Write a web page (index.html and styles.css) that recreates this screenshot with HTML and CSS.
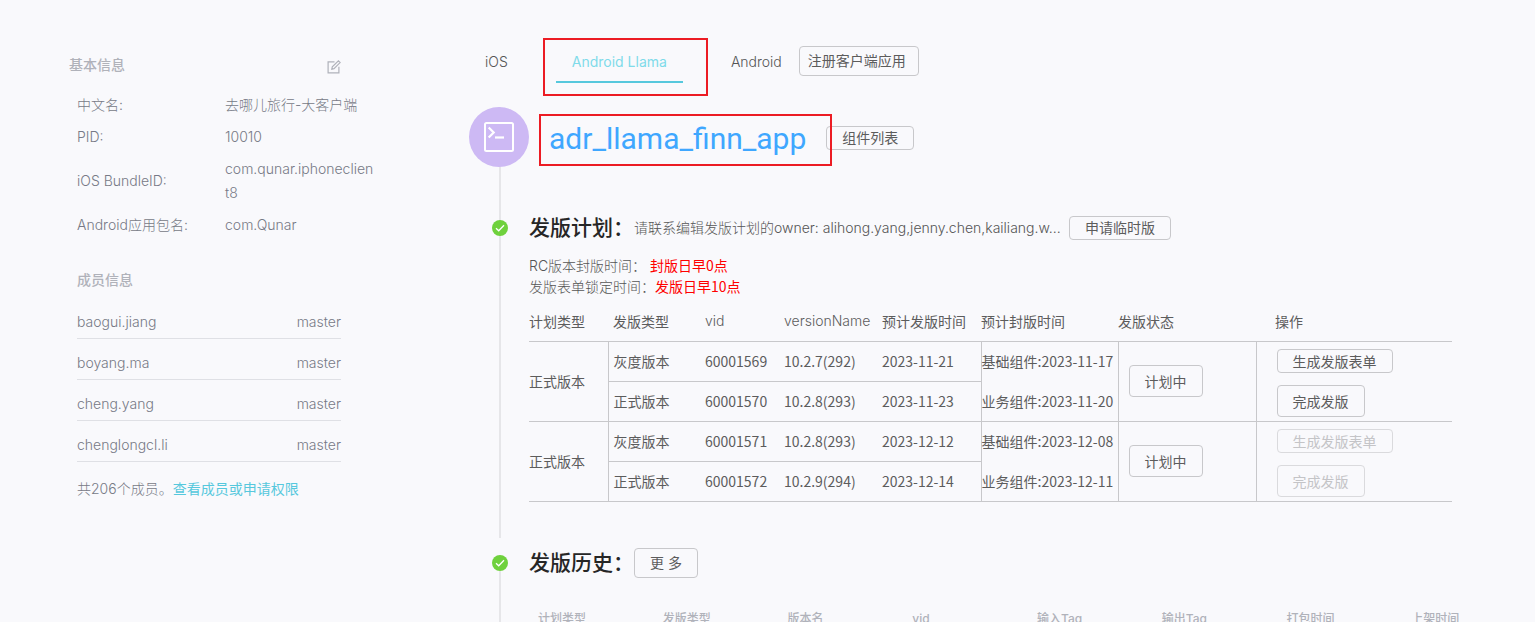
FILE: index.html
```html
<!DOCTYPE html>
<html lang="zh-CN">
<head>
<meta charset="utf-8">
<title>adr_llama_finn_app</title>
<link rel="stylesheet" href="styles.css">
</head>
<body>
<div class="app">
  <aside class="sidebar">
    <section class="basic">
      <header class="basic-head">
        <h2 class="side-title">基本信息</h2>
        <button class="icon-btn" type="button" aria-label="编辑">
          <svg width="14" height="14" viewBox="0 0 14 14" fill="none" stroke="#b0b2ba" stroke-width="1.2"><path d="M7.5 1.8H1.1v11.1h10.800V6.700"/><path d="M4.800 9.200l.5-2.300L11.400.9l1.700 1.700-6.100 6.100z"/></svg>
        </button>
      </header>
      <dl class="info">
        <dt>中文名:</dt><dd>去哪儿旅行-大客户端</dd>
        <dt>PID:</dt><dd>10010</dd>
        <dt>iOS BundleID:</dt><dd>com.qunar.iphoneclient8</dd>
        <dt>Android应用包名:</dt><dd>com.Qunar</dd>
      </dl>
    </section>
    <section class="members">
      <h2 class="side-title">成员信息</h2>
      <ul class="member-list">
        <li><span>baogui.jiang</span><span>master</span></li>
        <li><span>boyang.ma</span><span>master</span></li>
        <li><span>cheng.yang</span><span>master</span></li>
        <li><span>chenglongcl.li</span><span>master</span></li>
      </ul>
      <p class="member-total">共206个成员。<a href="#members">查看成员或申请权限</a></p>
    </section>
  </aside>

  <main class="main">
    <nav class="tabs">
      <a class="tab" href="#ios">iOS</a>
      <a class="tab tab-active" href="#llama">Android Llama<span class="mark mark-tab"></span></a>
      <a class="tab" href="#android">Android</a>
      <button class="btn btn-register" type="button">注册客户端应用</button>
    </nav>

    <div class="node node-app">
      <div class="rail">
        <div class="avatar">
          <svg width="30" height="30" viewBox="0 0 30 30" fill="none" stroke="#fff"><rect x="1" y="1" width="28" height="28" rx="1.500" stroke-width="2"/><path d="M4.700 5.500l5 5-5 5" stroke-width="2.200"/><path d="M11 15.500h9" stroke-width="2.200"/></svg>
        </div>
      </div>
      <div class="app-head">
        <h1 class="app-name"><a href="#app">adr_llama_finn_app</a><span class="mark mark-name"></span></h1>
        <button class="btn btn-small" type="button">组件列表</button>
      </div>
    </div>

    <div class="node node-plan">
      <div class="rail">
        <svg class="dot" width="16" height="16" viewBox="0 0 16 16"><circle cx="8" cy="8" r="8" fill="#6fd13d"/><path d="M4 8.200l2.700 2.600L12 5.300" fill="none" stroke="#fff" stroke-width="1.300"/></svg>
      </div>
      <div class="body">
        <div class="head">
          <h2 class="title">发版计划：</h2>
          <span class="owner">请联系编辑发版计划的owner: alihong.yang,jenny.chen,kailiang.w...</span>
          <button class="btn btn-small" type="button">申请临时版</button>
        </div>
        <p class="note">RC版本封版时间： <em>封版日早0点</em></p>
        <p class="note">发版表单锁定时间：<em>发版日早10点</em></p>
        <table class="plan">
          <colgroup><col class="c1"><col class="c2"><col class="c3"><col class="c4"><col class="c5"><col class="c6"><col class="c7"><col class="c8"></colgroup>
          <thead>
            <tr><th>计划类型</th><th class="in">发版类型</th><th class="latin">vid</th><th class="latin">versionName</th><th>预计发版时间</th><th>预计封版时间</th><th>发版状态</th><th class="op">操作</th></tr>
          </thead>
          <tbody>
            <tr>
              <td class="line" rowspan="2">正式版本</td>
              <td class="in left line">灰度版本</td><td class="line">60001569</td><td class="line">10.2.7(292)</td><td class="line">2023-11-21</td>
              <td class="left">基础组件:2023-11-17</td>
              <td class="left line state" rowspan="2"><button class="btn" type="button">计划中</button></td>
              <td class="left act"><button class="btn btn-small" type="button">生成发版表单</button></td>
            </tr>
            <tr>
              <td class="in left line">正式版本</td><td class="line">60001570</td><td class="line">10.2.8(293)</td><td class="line">2023-11-23</td>
              <td class="left line">业务组件:2023-11-20</td>
              <td class="left line act"><button class="btn" type="button">完成发版</button></td>
            </tr>
            <tr>
              <td class="line" rowspan="2">正式版本</td>
              <td class="in left line">灰度版本</td><td class="line">60001571</td><td class="line">10.2.8(293)</td><td class="line">2023-12-12</td>
              <td class="left">基础组件:2023-12-08</td>
              <td class="left line state" rowspan="2"><button class="btn" type="button">计划中</button></td>
              <td class="left act"><button class="btn btn-small" type="button" disabled>生成发版表单</button></td>
            </tr>
            <tr>
              <td class="in left line">正式版本</td><td class="line">60001572</td><td class="line">10.2.9(294)</td><td class="line">2023-12-14</td>
              <td class="left line">业务组件:2023-12-11</td>
              <td class="left line act"><button class="btn" type="button" disabled>完成发版</button></td>
            </tr>
          </tbody>
        </table>
      </div>
    </div>

    <div class="node node-history">
      <div class="rail">
        <svg class="dot" width="16" height="16" viewBox="0 0 16 16"><circle cx="8" cy="8" r="8" fill="#6fd13d"/><path d="M4 8.200l2.700 2.600L12 5.300" fill="none" stroke="#fff" stroke-width="1.300"/></svg>
      </div>
      <div class="body">
        <div class="head">
          <h2 class="title">发版历史：</h2>
          <button class="btn btn-more" type="button">更 多</button>
        </div>
        <table class="history">
          <thead>
            <tr><th>计划类型</th><th>发版类型</th><th>版本名</th><th>vid</th><th>输入Tag</th><th>输出Tag</th><th>打包时间</th><th>上架时间</th></tr>
          </thead>
        </table>
      </div>
    </div>
  </main>
</div>
</body>
</html>
```

FILE: styles.css
```css
* { box-sizing: border-box; }

body {
  margin: 0;
  background: #f9f9fc;
  color: #555;
  font: 300 14px/20px Inter, "Noto Sans CJK SC", sans-serif;
}

h1, h2, p, ul, dl, dd { margin: 0; padding: 0; font-weight: inherit; }
ul { list-style: none; }
a { color: inherit; text-decoration: none; }

.app {
  display: grid;
  grid-template-columns: 469px 1fr;
  height: 100vh;
  overflow: hidden;
}

/* Sidebar */
.sidebar { padding: 55px 96px 0 69px; color: #777a86; }
.side-title { font-size: 14px; line-height: 20px; font-weight: 500; color: #b0b2ba; }
.basic-head {
  display: flex;
  justify-content: space-between;
  align-items: center;
  padding-right: 32px;
}
.icon-btn { padding: 4px 0 0; border: 0; background: none; line-height: 0; }
.info {
  display: grid;
  grid-template-columns: 140px 152px;
  gap: 8px;
  align-items: center;
  padding: 18px 0 0 8px;
  line-height: 24px;
}
.info dd { overflow-wrap: anywhere; }
.members { padding: 33px 32px 0 8px; }
.member-list { padding-top: 8px; }
.member-list li {
  display: flex;
  justify-content: space-between;
  padding: 14px 0 6px;
  border-bottom: 1px solid #dfe0e5;
}
.member-total { padding-top: 17px; }
.member-total a { color: #56c8dd; font-weight: 400; }

/* Buttons */
.btn {
  height: 32px;
  padding: 0 15px;
  border: 1px solid #c8c8cb;
  border-radius: 4px;
  background: transparent;
  color: #5c5c5c;
  font: inherit;
  font-weight: 400;
  white-space: nowrap;
}
.btn-small { height: 24px; }
.btn-register { height: 30px; margin-bottom: 2px; padding: 0 12px 0 8px; }
.btn-more { height: 30px; }
.btn:disabled { color: #c4c4c7; border-color: #dadadd; }

/* Tabs */
.main { padding: 40px 8px 0 0; min-width: 0; }
.tabs { display: flex; align-items: center; }
.tab {
  position: relative;
  margin-right: 32px;
  padding: 12px 16px 9px;
  border-bottom: 2px solid transparent;
}
.tab:nth-child(3) { margin-right: 1px; }
.tab-active { color: #7fdbea; font-weight: 400; border-color: #56c8dd; }

/* Red highlight frames laid over the content */
.mark { position: absolute; border: 2px solid #ec1c24; pointer-events: none; }
.mark-tab { inset: -2px -25px -15px -13px; }
.mark-name { inset: -4px -26px -8px -10px; }

/* Timeline */
.node { display: grid; grid-template-columns: 60px 1fr; }
.rail { position: relative; display: flex; justify-content: center; align-items: start; }
.rail::before {
  content: "";
  position: absolute;
  top: 0;
  bottom: 0;
  left: 30px;
  width: 2px;
  background: #e6e6e9;
}
.avatar {
  position: relative;
  display: flex;
  align-items: center;
  justify-content: center;
  width: 60px;
  height: 60px;
  border-radius: 50%;
  background: #cdb9f4;
}
.dot { position: relative; left: 1px; }
.node-app { padding-top: 24px; }
.app-head { display: flex; align-items: center; gap: 20px; padding: 2px 0 0 20px; height: 60px; }
.app-name {
  position: relative;
  padding-top: 2px;
  font: 400 30px/38px Roboto, sans-serif;
  color: #3fa7ff;
}
.node-plan .rail { padding-top: 53px; }
.node-plan .body { padding-top: 45px; }
.node-plan { padding-bottom: 10px; }
.node-history .rail { padding-top: 7px; }
.node-history .rail::before { top: 23px; }

.head { display: flex; align-items: center; height: 30px; }
.title { font-size: 21px; line-height: 30px; font-weight: 500; color: #262626; }
.owner { flex: 0 0 419px; min-width: 0; margin-right: 16px; white-space: nowrap; }
.note { height: 21px; line-height: 21px; }
.node-plan .head { height: 32px; margin-bottom: 11px; }
.note em {
  font-style: normal;
  font-weight: 400;
  font-family: "Noto Sans CJK SC", sans-serif;
  color: #f00;
}

/* Tables */
table { border-collapse: collapse; table-layout: fixed; }
th, td { padding: 0; text-align: left; font-weight: inherit; }
.plan {
  width: calc(100% - 75px);
  margin: 4px 0 36px;
  color: #5c5c5c;
  font-family: "Noto Sans CJK SC", sans-serif;
  font-weight: 400;
}
.plan tbody { border-top: 1px solid #c8c8cb; }
.plan th { height: 40px; }
.plan td { height: 40px; white-space: nowrap; }
.plan .line { border-bottom: 1px solid #c8c8cb; }
.plan .left { border-left: 1px solid #c8c8cb; }
.plan .in { padding-left: 5px; }
.plan .latin { font-family: Inter, sans-serif; font-weight: 300; }
.plan .state { padding-left: 10px; }
.plan .act { padding-left: 20px; }
.plan .op { padding-left: 19px; }
.c1 { width: 79px; }
.c2 { width: 97px; }
.c3 { width: 79px; }
.c4 { width: 98px; }
.c5 { width: 99px; }
.c6 { width: 137px; }
.c7 { width: 138px; }
.c8 { width: 196px; }
.history { width: 100%; margin-top: 31px; }
.history th { padding-left: 9px; font-size: 12px; font-weight: 500; color: #b0b2ba; }
```
